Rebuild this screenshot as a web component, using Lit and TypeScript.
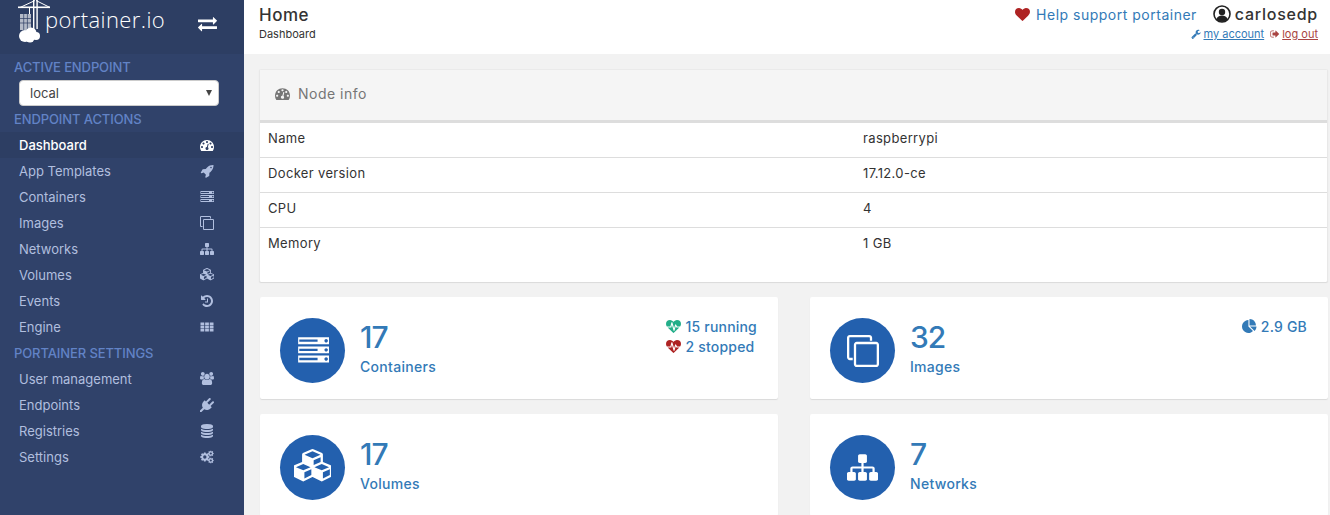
import { LitElement, html, css, svg } from "lit";
import { customElement } from "lit/decorators.js";

const FA: Record<string, [number, string]> = {
	tachometer: [1792, "M384 1152q0-53-37.5-90.5t-90.5-37.5-90.5 37.5-37.5 90.5 37.5 90.5 90.5 37.5 90.5-37.5 37.5-90.5zm192-448q0-53-37.5-90.5t-90.5-37.5-90.5 37.5-37.5 90.5 37.5 90.5 90.5 37.5 90.5-37.5 37.5-90.5zm428 481l101-382q6-26-7.5-48.5t-38.5-29.5-48 6.5-30 39.5l-101 382q-60 5-107 43.5t-63 98.5q-20 77 20 146t117 89 146-20 89-117q16-60-6-117t-72-91zm660-33q0-53-37.5-90.5t-90.5-37.5-90.5 37.5-37.5 90.5 37.5 90.5 90.5 37.5 90.5-37.5 37.5-90.5zm-640-640q0-53-37.5-90.5t-90.5-37.5-90.5 37.5-37.5 90.5 37.5 90.5 90.5 37.5 90.5-37.5 37.5-90.5zm448 192q0-53-37.5-90.5t-90.5-37.5-90.5 37.5-37.5 90.5 37.5 90.5 90.5 37.5 90.5-37.5 37.5-90.5zm320 448q0 261-141 483-19 29-54 29h-1402q-35 0-54-29-141-221-141-483 0-182 71-348t191-286 286-191 348-71 348 71 286 191 191 286 71 348z"],
	rocket: [1792, "M1504 448q0-40-28-68t-68-28-68 28-28 68 28 68 68 28 68-28 28-68zm224-288q0 249-75.5 430.5t-253.5 360.5q-81 80-195 176l-20 379q-2 16-16 26l-384 224q-7 4-16 4-12 0-23-9l-64-64q-13-14-8-32l85-276-281-281-276 85q-3 1-9 1-14 0-23-9l-64-64q-17-19-5-39l224-384q10-14 26-16l379-20q96-114 176-195 188-187 358-258t431-71q14 0 24 9.5t10 22.5z"],
	server: [1792, "M128 1408h1024v-128h-1024v128zm0-512h1024v-128h-1024v128zm1600 448q0-40-28-68t-68-28-68 28-28 68 28 68 68 28 68-28 28-68zm-1600-960h1024v-128h-1024v128zm1600 448q0-40-28-68t-68-28-68 28-28 68 28 68 68 28 68-28 28-68zm0-512q0-40-28-68t-68-28-68 28-28 68 28 68 68 28 68-28 28-68zm128 832v384h-1792v-384h1792zm0-512v384h-1792v-384h1792zm0-512v384h-1792v-384h1792z"],
	clone: [1792, "M1664 1632v-1088q0-13-9.5-22.5t-22.5-9.5h-1088q-13 0-22.5 9.5t-9.5 22.5v1088q0 13 9.5 22.5t22.5 9.5h1088q13 0 22.5-9.5t9.5-22.5zm128-1088v1088q0 66-47 113t-113 47h-1088q-66 0-113-47t-47-113v-1088q0-66 47-113t113-47h1088q66 0 113 47t47 113zm-384-384v160h-128v-160q0-13-9.5-22.5t-22.5-9.5h-1088q-13 0-22.5 9.5t-9.5 22.5v1088q0 13 9.5 22.5t22.5 9.5h160v128h-160q-66 0-113-47t-47-113v-1088q0-66 47-113t113-47h1088q66 0 113 47t47 113z"],
	sitemap: [1792, "M1792 1248v320q0 40-28 68t-68 28h-320q-40 0-68-28t-28-68v-320q0-40 28-68t68-28h96v-192h-512v192h96q40 0 68 28t28 68v320q0 40-28 68t-68 28h-320q-40 0-68-28t-28-68v-320q0-40 28-68t68-28h96v-192h-512v192h96q40 0 68 28t28 68v320q0 40-28 68t-68 28h-320q-40 0-68-28t-28-68v-320q0-40 28-68t68-28h96v-192q0-52 38-90t90-38h512v-192h-96q-40 0-68-28t-28-68v-320q0-40 28-68t68-28h320q40 0 68 28t28 68v320q0 40-28 68t-68 28h-96v192h512q52 0 90 38t38 90v192h96q40 0 68 28t28 68z"],
	cubes: [2048, "M576 1632l384-192v-314l-384 164v342zm-64-454l404-173-404-173-404 173zm1088 454l384-192v-314l-384 164v342zm-64-454l404-173-404-173-404 173zm-448-293l384-165v-266l-384 164v267zm-64-379l441-189-441-189-441 189zm1088 518v416q0 36-19 67t-52 47l-448 224q-25 14-57 14t-57-14l-448-224q-4-2-7-4-2 2-7 4l-448 224q-25 14-57 14t-57-14l-448-224q-33-16-52-47t-19-67v-416q0-38 21.5-70t56.5-48l434-186v-400q0-38 21.5-70t56.5-48l448-192q23-10 50-10t50 10l448 192q35 16 56.5 48t21.5 70v400l434 186q36 16 57 48t21 70z"],
	history: [1792, "M1664 896q0 156-61 298t-164 245-245 164-298 61q-172 0-327-72.5t-264-204.5q-7-10-6.5-22.5t8.5-20.5l137-138q10-9 25-9 16 2 23 12 73 95 179 147t225 52q104 0 198.5-40.5t163.5-109.5 109.5-163.5 40.5-198.5-40.5-198.5-109.5-163.5-163.5-109.5-198.5-40.5q-98 0-188 35.5t-160 101.5l137 138q31 30 14 69-17 40-59 40h-448q-26 0-45-19t-19-45v-448q0-42 40-59 39-17 69 14l130 129q107-101 244.5-156.5t284.5-55.5q156 0 298 61t245 164 164 245 61 298zm-640-288v448q0 14-9 23t-23 9h-320q-14 0-23-9t-9-23v-64q0-14 9-23t23-9h224v-352q0-14 9-23t23-9h64q14 0 23 9t9 23z"],
	th: [1792, "M64 320h480v340h-480zM656 320h480v340h-480zM1248 320h480v340h-480zM64 726h480v340h-480zM656 726h480v340h-480zM1248 726h480v340h-480zM64 1132h480v340h-480zM656 1132h480v340h-480zM1248 1132h480v340h-480z"],
	users: [1920, "M593 896q-162 5-265 128h-134q-82 0-138-40.5t-56-118.5q0-353 124-353 6 0 43.5 21t97.5 42.5 119 21.5q67 0 133-23-5 37-5 66 0 139 81 256zm1071 637q0 120-73 189.5t-194 69.5h-874q-121 0-194-69.5t-73-189.5q0-53 3.5-103.5t14-109 26.5-108.5 43-97.5 62-81 85.5-53.5 111.5-20q10 0 43 21.5t73 48 107 48 135 21.5 135-21.5 107-48 73-48 43-21.5q61 0 111.5 20t85.5 53.5 62 81 43 97.5 26.5 108.5 14 109 3.5 103.5zm-1024-1277q0 106-75 181t-181 75-181-75-75-181 75-181 181-75 181 75 75 181zm704 384q0 159-112.5 271.5t-271.5 112.5-271.5-112.5-112.5-271.5 112.5-271.5 271.5-112.5 271.5 112.5 112.5 271.5zm576 225q0 78-56 118.5t-138 40.5h-134q-103-123-265-128 81-117 81-256 0-29-5-66 66 23 133 23 59 0 119-21.5t97.5-42.5 43.5-21q124 0 124 353zm-128-609q0 106-75 181t-181 75-181-75-75-181 75-181 181-75 181 75 75 181z"],
	plug: [1792, "M1755 453q37 38 37 90.5t-37 90.5l-401 400 150 150-160 160q-163 163-389.5 186.5t-411.5-100.5l-362 362h-181v-181l362-362q-124-185-100.5-411.5t186.5-389.5l160-160 150 150 400-401q38-37 91-37t90 37 37 90.5-37 90.5l-400 401 234 234 401-400q38-37 91-37t90 37z"],
	database: [1792, "M896 768q237 0 443-43t325-127v170q0 69-103 128t-280 93.5-385 34.5-385-34.5-280-93.5-103-128v-170q119 84 325 127t443 43zm0 768q237 0 443-43t325-127v170q0 69-103 128t-280 93.5-385 34.5-385-34.5-280-93.5-103-128v-170q119 84 325 127t443 43zm0-384q237 0 443-43t325-127v170q0 69-103 128t-280 93.5-385 34.5-385-34.5-280-93.5-103-128v-170q119 84 325 127t443 43zm0-1152q208 0 385 34.5t280 93.5 103 128v128q0 69-103 128t-280 93.5-385 34.5-385-34.5-280-93.5-103-128v-128q0-69 103-128t280-93.5 385-34.5z"],
	heart: [1792, "M896 1664q-26 0-44-18l-624-602q-10-8-27.5-26t-55.5-65.5-68-97.5-53.5-121-23.5-138q0-220 127-344t351-124q62 0 126.5 21.5t120 58 95.5 68.5 76 68q36-36 76-68t95.5-68.5 120-58 126.5-21.5q224 0 351 124t127 344q0 221-229 450l-623 600q-18 18-44 18z"],
	heartbeat: [1792, "M1280 1024h305q-5 6-10 10.5t-9 7.5l-3 4-623 600q-18 18-44 18t-44-18l-624-602q-5-2-21-20h369q22 0 39.5-13.5t22.5-34.5l70-281 190 667q6 20 23 33t39 13q21 0 38-13t23-33l146-485 56 112q18 35 57 35zm512-428q0 145-103 300h-369l-111-221q-8-17-25.5-27t-36.5-8q-45 5-56 46l-129 430-196-686q-6-20-23.5-33t-39.5-13-39 13.5-22 34.5l-116 464h-423q-103-155-103-300 0-220 127-344t351-124q62 0 126.5 21.5t120 58 95.5 68.5 76 68q36-36 76-68t95.5-68.5 120-58 126.5-21.5q224 0 351 124t127 344z"],
	wrench: [1792, "M448 1472q0-26-19-45t-45-19-45 19-19 45 19 45 45 19 45-19 19-45zm644-420l-682 682q-37 37-90 37-52 0-91-37l-106-108q-38-36-38-90 0-53 38-91l681-681q39 98 114.5 173.5t173.5 114.5zm634-435q0 39-23 106-47 134-164.5 217.5t-258.5 83.5q-185 0-316.5-131.5t-131.5-316.5 131.5-316.5 316.5-131.5q58 0 121.5 16.5t107.5 46.5q16 11 16 28t-16 28l-293 169v224l193 107q5-3 79-48.5t135.5-81 70.5-35.5q15 0 23.5 10t8.5 25z"],
	signout: [1792, "M704 1440q0 4 1 20t.5 26.5-3 23.5-10 19.5-20.5 6.5h-320q-119 0-203.5-84.5t-84.5-203.5v-704q0-119 84.5-203.5t203.5-84.5h320q13 0 22.5 9.5t9.5 22.5q0 4 1 20t.5 26.5-3 23.5-10 19.5-20.5 6.5h-320q-66 0-113 47t-47 113v704q0 66 47 113t113 47h312l11.5 1 11.5 3 8 5.5 7 9 2 13.5zm928-544q0 26-19 45l-544 544q-19 19-45 19t-45-19-19-45v-288h-448q-26 0-45-19t-19-45v-384q0-26 19-45t45-19h448v-288q0-26 19-45t45-19 45 19l544 544q19 19 19 45z"],
	pie: [1792, "M768 890l546 546q-106 108-247.5 168t-298.5 60q-209 0-385.5-103t-279.5-279.5-103-385.5 103-385.5 279.5-279.5 385.5-103v762zm187 6h773q0 157-60 298.5t-168 247.5zm709-128h-768v-768q209 0 385.5 103t279.5 279.5 103 385.5z"],
	exchange: [1792, "M1792 1184v192q0 13-9.5 22.5t-22.5 9.5h-1376v192q0 13-9.5 22.5t-22.5 9.5q-12 0-24-10l-319-320q-9-9-9-22 0-14 9-23l320-320q9-9 23-9 13 0 22.5 9.5t9.5 22.5v192h1376q13 0 22.5 9.5t9.5 22.5zm0-544q0 14-9 23l-320 320q-9 9-23 9-13 0-22.5-9.5t-9.5-22.5v-192h-1376q-13 0-22.5-9.5t-9.5-22.5v-192q0-13 9.5-22.5t22.5-9.5h1376v-192q0-14 9-23t23-9q12 0 24 10l319 319q9 9 9 23z"],
};

// fa-cogs is one big and two small gears, built here instead of a long path
function gear(cx: number, cy: number, r: number, hole: number, teeth: number) {
	const pts: string[] = [];
	const step = (Math.PI * 2) / teeth;
	for (let i = 0; i < teeth; i++) {
		const a = i * step;
		for (const [rad, off] of [[r * 0.76, -0.3], [r, -0.17], [r, 0.17], [r * 0.76, 0.3]]) {
			const t = a + off * step * 1.3;
			pts.push(`${(cx + rad * Math.cos(t)).toFixed(0)} ${(cy + rad * Math.sin(t)).toFixed(0)}`);
		}
	}
	const c = `M${cx - hole} ${cy}a${hole} ${hole} 0 1 0 ${hole * 2} 0a${hole} ${hole} 0 1 0 ${-hole * 2} 0z`;
	return `M${pts.join("L")}z${c}`;
}
FA.cogs = [1920, gear(660, 960, 640, 230, 8) + gear(1480, 480, 400, 150, 8) + gear(1480, 1440, 400, 150, 8)];

function icon(name: string, size: number) {
	const [box, d] = FA[name];
	return html`<svg class="icon" width=${size} height=${size} viewBox="0 0 ${box} ${box}">
		${svg`<path d=${d} fill="currentColor" fill-rule="evenodd"></path>`}
	</svg>`;
}

const BADGE_SIZE: Record<string, number> = { server: 32, clone: 32, cubes: 37, sitemap: 31 };

const ACTIONS = [
	["Dashboard", "tachometer"],
	["App Templates", "rocket"],
	["Containers", "server"],
	["Images", "clone"],
	["Networks", "sitemap"],
	["Volumes", "cubes"],
	["Events", "history"],
	["Engine", "th"],
];

const SETTINGS = [
	["User management", "users"],
	["Endpoints", "plug"],
	["Registries", "database"],
	["Settings", "cogs"],
];

const NODE_INFO = [
	["Name", "raspberrypi"],
	["Docker version", "17.12.0-ce"],
	["CPU", "4"],
	["Memory", "1 GB"],
];

@customElement("app-root")
export class AppRoot extends LitElement {
	static styles = css`
		:host {
			display: flex;
			height: 100vh;
			overflow: hidden;
			background: #f2f2f2;
			font-family: Inter, "Liberation Sans", sans-serif;
			color: #333;
		}

		.icon {
			display: block;
			flex: none;
		}

		.sidebar {
			width: 244px;
			flex: none;
			background: #30426a;
			color: #b1bfdf;
			font-size: 13px;
		}

		.brand {
			height: 54px;
			background: #2d3e63;
			display: flex;
			color: #fff;
		}

		.logo {
			margin-left: 18px;
			display: block;
		}

		.logo-text {
			font-family: "Open Sans", sans-serif;
			font-weight: 300;
			font-size: 22px;
			line-height: 38px;
			letter-spacing: 0.4px;
			margin-left: -7px;
		}

		.switch {
			margin: 14px 27px 0 auto;
		}

		.side-title {
			height: 26px;
			line-height: 26px;
			padding-left: 14px;
			color: #6283c6;
			font-size: 13px;
			font-weight: 500;
			letter-spacing: -0.1px;
			white-space: nowrap;
		}

		.select-row {
			height: 26px;
			margin-left: 19px;
			width: 200px;
			position: relative;
		}

		/* the native arrow is a chevron here, the reference has a solid triangle */
		.select-row::after {
			content: "";
			position: absolute;
			right: 7px;
			top: 10px;
			border-left: 3px solid transparent;
			border-right: 3px solid transparent;
			border-top: 6px solid #444;
		}

		select {
			appearance: none;
			width: 200px;
			height: 26px;
			box-sizing: border-box;
			border: 1px solid #ccc;
			border-radius: 4px;
			background: #fff;
			color: #444;
			padding: 0 10px;
			font: 13px Inter, sans-serif;
			display: block;
		}

		.nav-item {
			height: 26px;
			display: flex;
			align-items: center;
			justify-content: space-between;
			padding: 0 30px 0 19px;
		}

		.nav-item.active {
			background: #2d3e63;
			color: #fff;
			font-weight: 500;
		}

		.main {
			flex: 1;
			min-width: 0;
		}

		.heading {
			height: 54px;
			box-sizing: border-box;
			background: #fff;
			display: flex;
			justify-content: space-between;
			padding: 4px 12px 0 15px;
		}

		.page-title {
			font-size: 17px;
			font-weight: 500;
			letter-spacing: 0.5px;
			line-height: 22px;
		}

		.crumb {
			font-size: 11px;
			line-height: 14px;
			margin-top: 1px;
		}

		.user-top {
			display: flex;
			align-items: center;
			justify-content: flex-end;
			height: 20px;
		}

		.help {
			display: flex;
			align-items: center;
			gap: 6px;
			color: #337ab7;
			font-size: 14px;
			letter-spacing: 0.5px;
			margin-right: 16px;
		}

		.heart {
			color: #ae2323;
		}

		.username {
			display: flex;
			align-items: center;
			gap: 4px;
			font-size: 16px;
			font-weight: 500;
			letter-spacing: 0.75px;
			color: #333;
		}

		.user-links {
			display: flex;
			justify-content: flex-end;
			font-size: 11px;
			margin-top: 3px;
			line-height: 14px;
		}

		.user-links a {
			display: flex;
			align-items: center;
			gap: 2px;
			text-decoration: underline;
		}

		.account {
			color: #337ab7;
			margin-right: 6px;
		}

		.logout {
			color: #a94442;
		}

		.content {
			padding: 15px 2px 0 16px;
		}

		.widget {
			background: #fff;
			border-radius: 2px;
			box-shadow: 0 1px 1px rgba(0, 0, 0, 0.1);
		}

		.node-info {
			margin-left: -1px;
			border: 1px solid #e8e8e8;
			border-top-color: #eaeaea;
			border-bottom: none;
			padding-bottom: 20px;
			margin-bottom: 15px;
		}

		.widget-head {
			height: 46px;
			display: flex;
			align-items: center;
			gap: 8px;
			padding: 0 0 4px 15px;
			background: #f5f5f5;
			border-bottom: 2px solid #ddd;
			color: #767676;
			font-size: 14px;
			font-weight: 400;
			letter-spacing: 0.5px;
		}

		.info-row {
			height: 29px;
			padding: 0 0 5px 8px;
			display: flex;
			align-items: center;
			font-size: 13px;
			letter-spacing: 0.35px;
			border-top: 1px solid #ddd;
		}

		.info-row:first-of-type {
			border-top: none;
		}

		.info-key {
			width: 595px;
		}

		.stats {
			display: grid;
			grid-template-columns: 1fr 1fr;
			gap: 15px 32px;
		}

		.stat {
			height: 102px;
			box-sizing: border-box;
			padding: 21px 21px 0 20px;
			display: flex;
			color: #337ab7;
		}

		.badge {
			width: 65px;
			height: 65px;
			border-radius: 50%;
			background: #2360ae;
			color: #fff;
			display: flex;
			align-items: center;
			justify-content: center;
			flex: none;
			margin-right: 15px;
		}

		.value {
			font-size: 30px;
			font-weight: 500;
			letter-spacing: -1px;
			line-height: 36px;
			padding-top: 1px;
		}

		.label {
			font-size: 14px;
			font-weight: 500;
			letter-spacing: 0.3px;
			margin-top: 2px;
			line-height: 20px;
		}

		.side-stats {
			margin-left: auto;
			font-size: 14px;
			font-weight: 500;
			letter-spacing: 0.2px;
			margin-top: -2px;
		}

		.side-stat {
			display: flex;
			align-items: center;
			gap: 4px;
			height: 20px;
		}

		.up {
			color: #23ae89;
		}

		.down {
			color: #ae2323;
		}
	`;

	private logo() {
		return html`<svg class="logo" width="34" height="44" viewBox="0 0 34 44" fill="#fff">
			${svg`
				<path d="M17 0.5l-15 7M18 0.5l14 7" fill="none" stroke="#fff"></path>
				<rect x="0" y="6.5" width="32" height="1.6"></rect>
				<rect x="15" y="0" width="1.4" height="29"></rect>
				<rect x="18.4" y="0" width="1.4" height="29"></rect>
				<rect x="11" y="8" width="1" height="6"></rect>
				<rect x="2" y="14" width="11" height="16" opacity=".65"></rect>
				<path d="M2 18.5h11M2 23h11M5.7 14v16M9.4 14v16" stroke="#2d3e63" stroke-width=".7"></path>
				<circle cx="7" cy="36" r="6"></circle>
				<circle cx="13" cy="33" r="5.5"></circle>
				<circle cx="12" cy="38" r="4.5"></circle>
				<circle cx="18" cy="36" r="4"></circle>
			`}
		</svg>`;
	}

	private userIcon() {
		return html`<svg width="18" height="18" viewBox="0 0 18 18">
			${svg`
				<circle cx="9" cy="9" r="8" fill="#fff" stroke="#222" stroke-width="1.6"></circle>
				<circle cx="9" cy="7" r="3.2" fill="#222"></circle>
				<path d="M3.5 14.5c.6-3 2.8-4 5.5-4s4.9 1 5.5 4a8 8 0 0 1-11 0z" fill="#222"></path>
			`}
		</svg>`;
	}

	private navItem(item: string[], active = false) {
		return html`<div class="nav-item ${active ? "active" : ""}">
			<span>${item[0]}</span>${icon(item[1], 14)}
		</div>`;
	}

	private stat(value: string, label: string, name: string, side?: unknown) {
		return html`<div class="widget stat">
			<div class="badge">${icon(name, BADGE_SIZE[name])}</div>
			<div>
				<div class="value">${value}</div>
				<div class="label">${label}</div>
			</div>
			${side}
		</div>`;
	}

	render() {
		return html`
			<div class="sidebar">
				<div class="brand">
					${this.logo()}
					<span class="logo-text">portainer.io</span>
					<span class="switch">${icon("exchange", 19)}</span>
				</div>
				<div class="side-title">ACTIVE ENDPOINT</div>
				<div class="select-row"><select><option>local</option></select></div>
				<div class="side-title">ENDPOINT ACTIONS</div>
				${ACTIONS.map((a, i) => this.navItem(a, i === 0))}
				<div class="side-title">PORTAINER SETTINGS</div>
				${SETTINGS.map((s) => this.navItem(s))}
			</div>
			<div class="main">
				<div class="heading">
					<div>
						<div class="page-title">Home</div>
						<div class="crumb">Dashboard</div>
					</div>
					<div>
						<div class="user-top">
							<span class="help"><span class="heart">${icon("heart", 15)}</span>Help support portainer</span>
							<span class="username">${this.userIcon()}carlosedp</span>
						</div>
						<div class="user-links">
							<a class="account">${icon("wrench", 10)}my account</a>
							<a class="logout">${icon("signout", 10)}log out</a>
						</div>
					</div>
				</div>
				<div class="content">
					<div class="widget node-info">
						<div class="widget-head">${icon("tachometer", 15)}Node info</div>
						${NODE_INFO.map(
							([k, v]) => html`<div class="info-row"><span class="info-key">${k}</span><span>${v}</span></div>`
						)}
					</div>
					<div class="stats">
						${this.stat("17", "Containers", "server", html`<div class="side-stats">
							<div class="side-stat"><span class="up">${icon("heartbeat", 15)}</span>15 running</div>
							<div class="side-stat"><span class="down">${icon("heartbeat", 15)}</span>2 stopped</div>
						</div>`)}
						${this.stat("32", "Images", "clone", html`<div class="side-stats">
							<div class="side-stat">${icon("pie", 15)}2.9 GB</div>
						</div>`)}
						${this.stat("17", "Volumes", "cubes")}
						${this.stat("7", "Networks", "sitemap")}
					</div>
				</div>
			</div>
		`;
	}
}
